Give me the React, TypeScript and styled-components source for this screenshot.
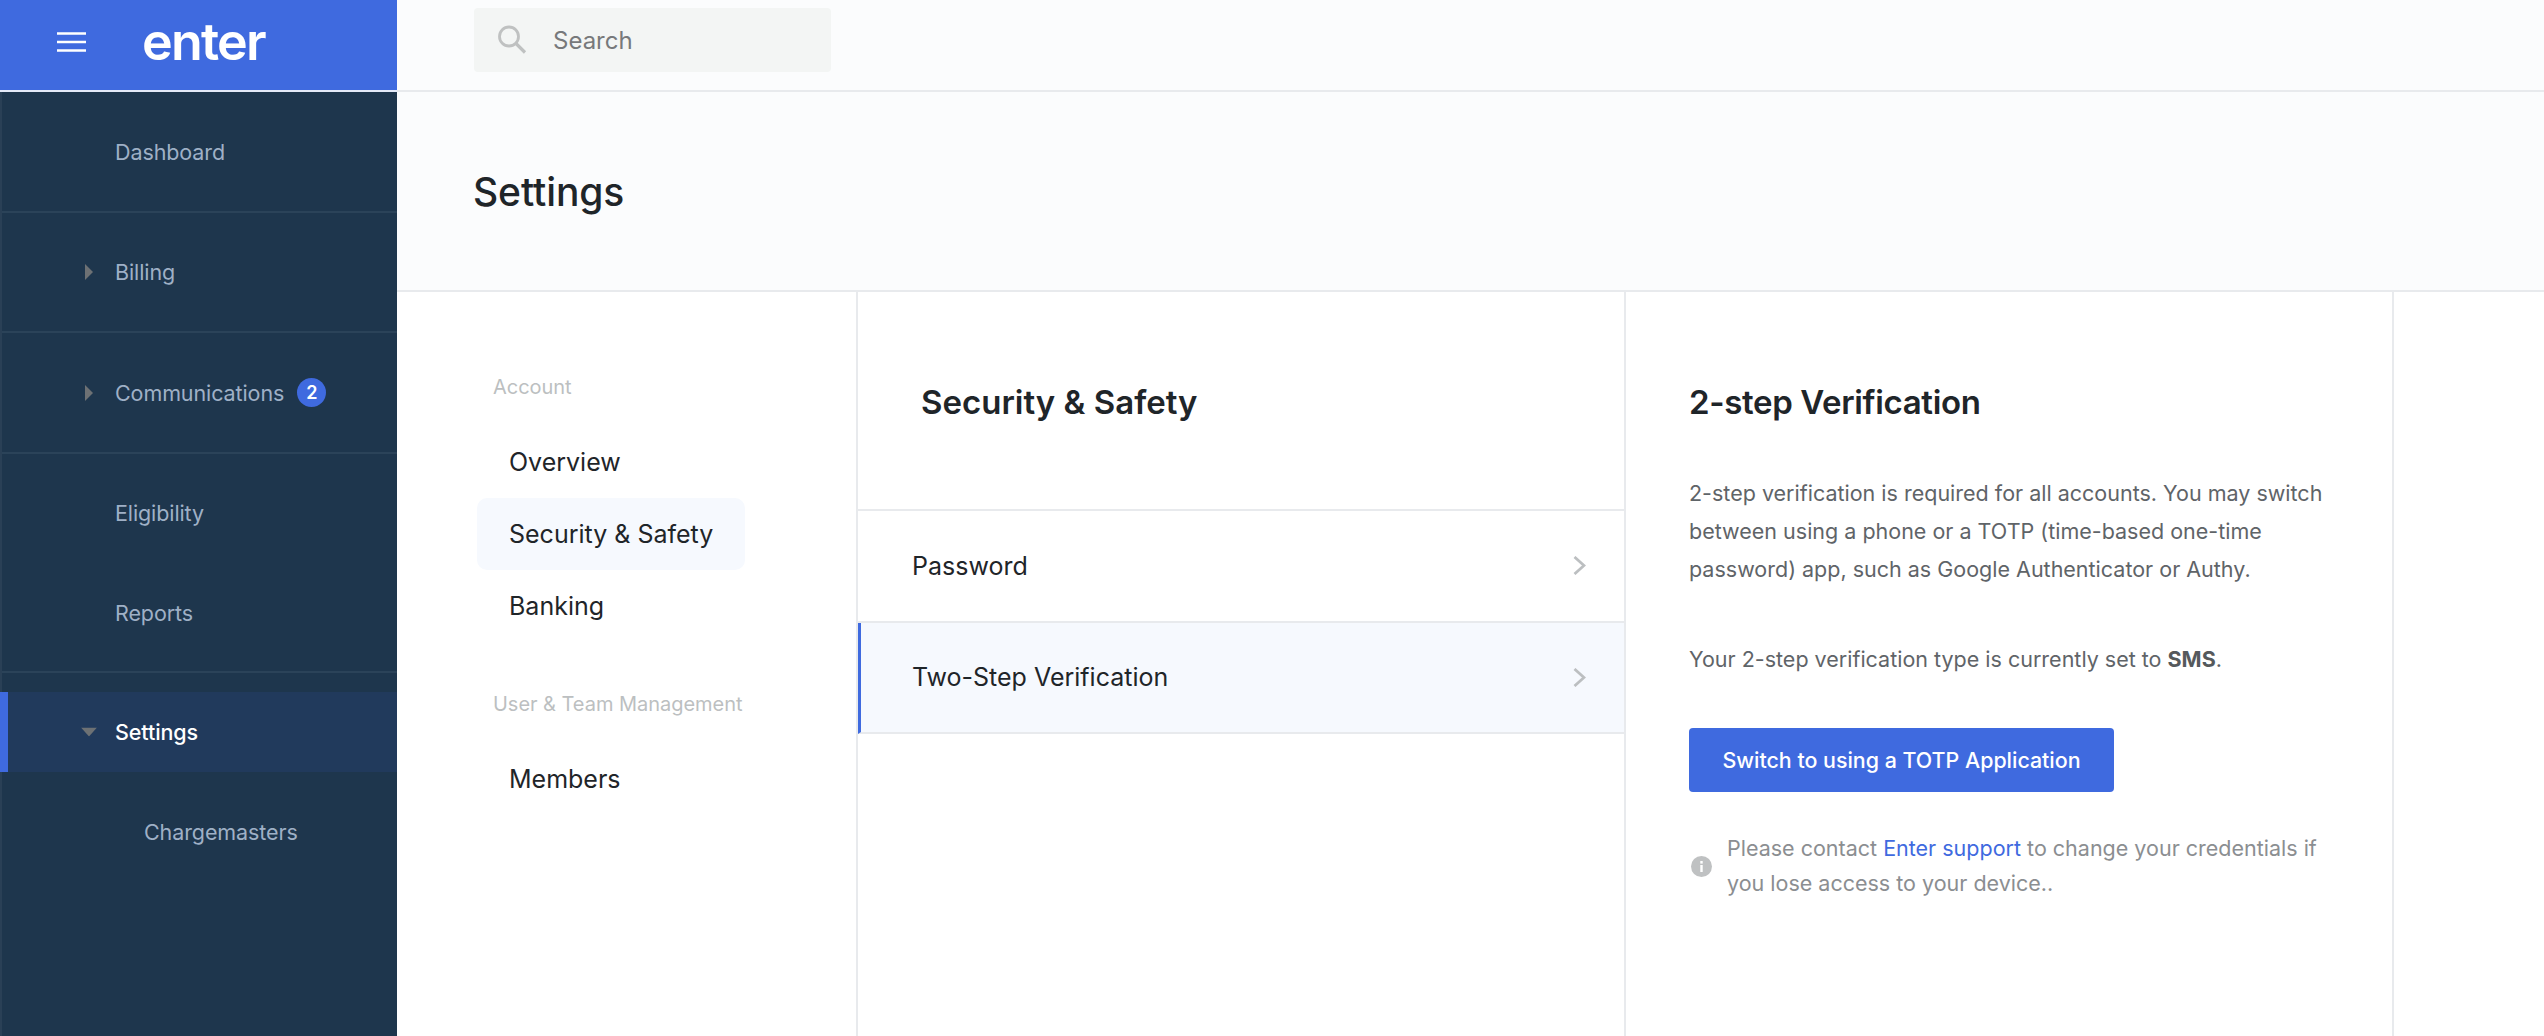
import React from 'react';
import styled, { createGlobalStyle } from 'styled-components';

const BLUE = '#3f6adf';
const LINE = '#e8eaed';
const INK = '#1f2529';

const GlobalStyle = createGlobalStyle`
  html, body {
    margin: 0;
    height: 100%;
    background: #fff;
    font-family: Inter, "Liberation Sans", sans-serif;
    overflow: hidden;
  }
  * { box-sizing: border-box; }
`;

const Page = styled.div`
  display: grid;
  grid-template-columns: 397px 1fr;
  width: 2544px;
  height: 1036px;
  overflow: hidden;
`;

const Sidebar = styled.aside`
  background: #1e364d;
  border-left: 2px solid #2a4056;
  display: flex;
  flex-direction: column;
  height: 100%;
`;

const Brand = styled.div`
  height: 92px;
  margin-left: -2px;
  background: ${BLUE};
  border-bottom: 2px solid #e4eaf8;
  display: flex;
  align-items: center;
  padding-left: 57px;
  gap: 55px;
  flex-shrink: 0;
`;

const Logo = styled.span`
  color: #fff;
  font-family: Inter, sans-serif;
  font-size: 52px;
  font-weight: 600;
  letter-spacing: -1.8px;
  line-height: 1;
  margin-top: -6px;
`;

const NavGroup = styled.div<{ $pad?: string; $divided?: boolean }>`
  padding: ${p => p.$pad || '0'};
  border-bottom: ${p => (p.$divided ? '2px solid #2b4359' : 'none')};
`;

const NavItem = styled.div<{ $h: number; $active?: boolean; $indent?: number; $top?: number }>`
  height: ${p => p.$h}px;
  margin-top: ${p => p.$top || 0}px;
  display: flex;
  align-items: center;
  position: relative;
  padding-left: ${p => p.$indent || 113}px;
  font-size: 21.5px;
  font-weight: ${p => (p.$active ? 500 : 400)};
  letter-spacing: -0.1px;
  color: ${p => (p.$active ? '#fff' : '#9fb0c6')};
  background: ${p => (p.$active ? '#213a5c' : 'transparent')};
  ${p => p.$active && `
    margin-left: -2px;
    border-left: 8px solid ${BLUE};
    padding-left: 107px;
  `}
`;

const Caret = styled.svg<{ $left: number }>`
  position: absolute;
  left: ${p => p.$left}px;
  top: 50%;
  transform: translateY(-50%);
`;

const Badge = styled.span`
  width: 29px;
  height: 29px;
  border-radius: 50%;
  background: ${BLUE};
  color: #fff;
  font-size: 18px;
  font-weight: 600;
  margin-left: 13px;
  display: flex;
  align-items: center;
  justify-content: center;
`;

const Main = styled.main`
  display: flex;
  flex-direction: column;
  min-width: 0;
`;

const TopBar = styled.header`
  height: 92px;
  background: #fbfcfd;
  border-bottom: 2px solid ${LINE};
  padding: 8px 0 0 77px;
  flex-shrink: 0;
`;

const SearchBox = styled.div`
  width: 357px;
  height: 64px;
  background: #f3f5f4;
  border-radius: 4px;
  display: flex;
  align-items: center;
  padding-left: 23px;
  gap: 26px;
  color: #77797b;
  font-size: 24px;
`;

const PageHead = styled.div`
  height: 200px;
  background: #fbfcfd;
  border-bottom: 2px solid ${LINE};
  display: flex;
  align-items: center;
  padding-left: 76px;
  flex-shrink: 0;
`;

const PageTitle = styled.h1`
  margin: 1px 0 0;
  font-size: 39px;
  font-weight: 500;
  letter-spacing: -0.1px;
  color: ${INK};
`;

const Columns = styled.div`
  flex: 1;
  display: grid;
  grid-template-columns: 461px 768px 768px;
`;

const SideCol = styled.nav`
  border-right: 2px solid ${LINE};
  padding: 80px 0 0 80px;
`;

const GroupLabel = styled.div<{ $top?: number }>`
  font-size: 20px;
  letter-spacing: -0.03px;
  color: #bcbfc1;
  height: 30px;
  line-height: 30px;
  padding-left: 16px;
  margin-top: ${p => p.$top || 0}px;
  margin-bottom: 24px;
`;

const SideLink = styled.div<{ $active?: boolean }>`
  width: 268px;
  height: 72px;
  display: flex;
  align-items: center;
  padding-left: 32px;
  font-size: 25px;
  color: ${INK};
  border-radius: 10px;
  background: ${p => (p.$active ? '#f6f9fe' : 'transparent')};
`;

const ListCol = styled.section`
  border-right: 2px solid ${LINE};
`;

const SectionHead = styled.div`
  height: 219px;
  padding: 90px 0 0 63px;
  border-bottom: 2px solid ${LINE};
`;

const SectionTitle = styled.h2<{ $tight?: boolean }>`
  margin: 0;
  font-size: 33px;
  line-height: 40px;
  font-weight: 600;
  letter-spacing: ${p => (p.$tight ? '-0.35px' : '0')};
  color: ${INK};
`;

const Row = styled.div<{ $active?: boolean }>`
  height: 111.5px;
  display: flex;
  align-items: center;
  justify-content: space-between;
  padding: 0 38px 0 ${p => (p.$active ? 51 : 54)}px;
  font-size: 25px;
  color: ${INK};
  border-bottom: 2px solid ${LINE};
  background: ${p => (p.$active ? '#f6f9fe' : 'transparent')};
  border-left: ${p => (p.$active ? `3px solid ${BLUE}` : 'none')};
`;

const DetailCol = styled.section`
  border-right: 2px solid ${LINE};
  padding: 90px 38px 0 63px;
`;

const Paragraph = styled.p<{ $top: number }>`
  margin: ${p => p.$top}px 0 0;
  font-size: 21.5px;
  line-height: 38px;
  color: #5f6468;
  strong { font-weight: 700; color: #55595c; }
`;

const PrimaryButton = styled.button`
  display: block;
  margin-top: 50px;
  width: 425px;
  height: 64px;
  border: none;
  border-radius: 4px;
  background: ${BLUE};
  color: #fff;
  font-family: inherit;
  font-size: 21.4px;
  font-weight: 500;
`;

const Note = styled.div`
  display: flex;
  align-items: center;
  margin-top: 39px;
  padding-left: 2px;
  gap: 15px;
`;

const NoteText = styled.p`
  margin: 0;
  font-size: 21.5px;
  line-height: 35px;
  white-space: nowrap;
  color: #8b8e91;
  a { color: ${BLUE}; text-decoration: none; }
`;

const CaretRight = ({ left }: { left: number }) => (
  <Caret $left={left} width="8" height="16" viewBox="0 0 8 16">
    <path d="M0 0 L8 8 L0 16 Z" fill="#6d7174" />
  </Caret>
);

const CaretDown = () => (
  <Caret $left={73} width="16" height="9" viewBox="0 0 16 9">
    <path d="M0 0 L16 0 L8 9 Z" fill="#6d7174" />
  </Caret>
);

const Chevron = () => (
  <svg width="13" height="19" viewBox="0 0 13 19" fill="none">
    <path d="M1.5 1 L11 9.5 L1.5 18" stroke="#bcbfc1" strokeWidth="2.8" />
  </svg>
);

const MenuIcon = () => (
  <svg width="30" height="20" viewBox="0 0 30 20" style={{ marginTop: -6 }}>
    <path d="M0 1.5 H29 M0 10 H29 M0 18.5 H29" stroke="#fff" strokeWidth="2.6" />
  </svg>
);

const SearchIcon = () => (
  <svg width="30" height="30" viewBox="0 0 30 30" fill="none">
    <circle cx="12" cy="11.5" r="9.5" stroke="#bfc1c1" strokeWidth="2.8" />
    <path d="M19 18.5 L28 27.5" stroke="#bfc1c1" strokeWidth="3.2" />
  </svg>
);

const InfoIcon = () => (
  <svg width="21" height="21" viewBox="0 0 21 21" style={{ flexShrink: 0 }}>
    <circle cx="10.5" cy="10.5" r="10.5" fill="#bfc1c2" />
    <rect x="9.3" y="9" width="2.4" height="7" fill="#fff" />
    <rect x="9.3" y="5" width="2.4" height="2.6" fill="#fff" />
  </svg>
);

export default function App() {
  return (
    <Page>
      <GlobalStyle />
      <Sidebar>
        <Brand>
          <MenuIcon />
          <Logo>enter</Logo>
        </Brand>
        <NavGroup $divided><NavItem $h={119}>Dashboard</NavItem></NavGroup>
        <NavGroup $divided><NavItem $h={118}><CaretRight left={83} />Billing</NavItem></NavGroup>
        <NavGroup $divided>
          <NavItem $h={119}><CaretRight left={83} />Communications<Badge>2</Badge></NavItem>
        </NavGroup>
        <NavGroup $divided $pad="9px 0 8px">
          <NavItem $h={100}>Eligibility</NavItem>
          <NavItem $h={100}>Reports</NavItem>
        </NavGroup>
        <NavGroup $pad="19px 0 0">
          <NavItem $h={80} $active><CaretDown />Settings</NavItem>
          <NavItem $h={80} $indent={142} $top={20}>Chargemasters</NavItem>
        </NavGroup>
      </Sidebar>
      <Main>
        <TopBar>
          <SearchBox><SearchIcon />Search</SearchBox>
        </TopBar>
        <PageHead><PageTitle>Settings</PageTitle></PageHead>
        <Columns>
          <SideCol>
            <GroupLabel>Account</GroupLabel>
            <SideLink>Overview</SideLink>
            <SideLink $active>Security &amp; Safety</SideLink>
            <SideLink>Banking</SideLink>
            <GroupLabel $top={47}>User &amp; Team Management</GroupLabel>
            <SideLink>Members</SideLink>
          </SideCol>
          <ListCol>
            <SectionHead><SectionTitle>Security &amp; Safety</SectionTitle></SectionHead>
            <Row>Password<Chevron /></Row>
            <Row $active>Two-Step Verification<Chevron /></Row>
          </ListCol>
          <DetailCol>
            <SectionTitle $tight>2-step Verification</SectionTitle>
            <Paragraph $top={52}>
              2-step verification is required for all accounts. You may switch between using a phone or a
              TOTP (time-based one-time password) app, such as Google Authenticator or Authy.
            </Paragraph>
            <Paragraph $top={52}>Your 2-step verification type is currently set to <strong>SMS</strong>.</Paragraph>
            <PrimaryButton>Switch to using a TOTP Application</PrimaryButton>
            <Note>
              <InfoIcon />
              <NoteText>
                Please contact <a href="#support">Enter support</a> to change your credentials if<br />
                you lose access to your device..
              </NoteText>
            </Note>
          </DetailCol>
        </Columns>
      </Main>
    </Page>
  );
}
